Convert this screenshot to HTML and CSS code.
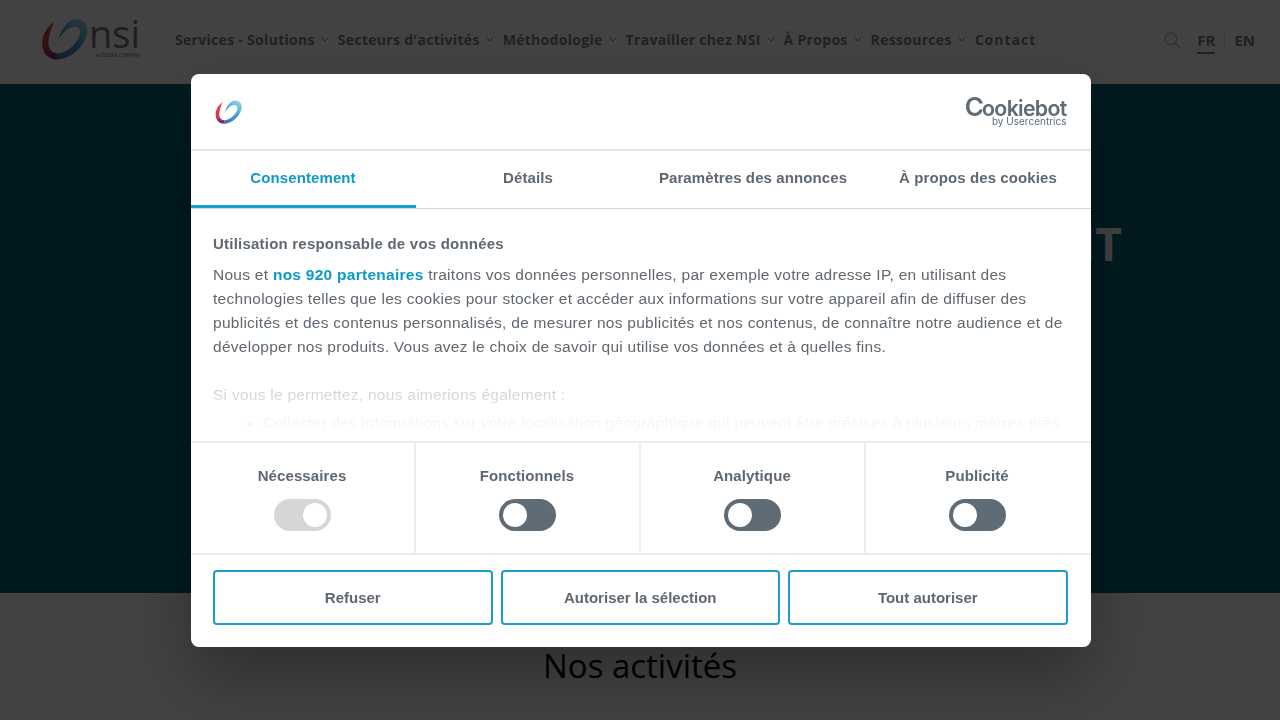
FILE: index.html
```html
<!DOCTYPE html>
<html lang="fr">
<head>
  <meta charset="UTF-8">
  <meta name="viewport" content="width=device-width, initial-scale=1.0">
  <title>NSI</title>
  <link rel="stylesheet" href="styles.css">
</head>
<body>
  <svg class="defs" width="0" height="0" aria-hidden="true">
    <defs>
      <linearGradient id="swirl-warm" gradientUnits="userSpaceOnUse" x1="5" y1="4" x2="9" y2="23">
        <stop offset="0" stop-color="#ee3a43"/>
        <stop offset="0.6" stop-color="#d03a50"/>
        <stop offset="1" stop-color="#5a2a80"/>
      </linearGradient>
      <linearGradient id="swirl-cool" gradientUnits="userSpaceOnUse" x1="10" y1="23" x2="24" y2="1">
        <stop offset="0" stop-color="#3f6fb5"/>
        <stop offset="0.5" stop-color="#4a9fd4"/>
        <stop offset="1" stop-color="#93d8e2"/>
      </linearGradient>
      <symbol id="swirl" viewBox="0 0 27 24">
        <path fill="url(#swirl-warm)" d="M7.5 2.3C3 5.5 .5 10 .7 15C.8 21 5 24 10 23.7L9 20.2C5.5 19.8 4 17 4.3 13.5C4.7 9.5 6 5.5 7.5 2.3Z"/>
        <path fill="url(#swirl-cool)" d="M10 23.7C17 23.3 24 17 26.3 10C27.8 5 25.5 .8 20.5 .6C16 .5 12 5 10 12C13 8 16.5 4.5 20 5C22.8 5.5 23 8.5 21.5 11.5C18.5 17 13.5 20.5 9 20.2Z"/>
      </symbol>
    </defs>
  </svg>

  <!-- Site header -->
  <header class="site-header">
    <a class="brand" href="#">
      <svg class="brand-mark"><use href="#swirl"/></svg>
      <span class="brand-text">
        <span class="brand-name">nsi</span>
        <span class="brand-sub">A CEGEKA COMPANY</span>
      </span>
    </a>
    <nav class="main-nav">
      <a href="#">Services - Solutions<svg class="chevron" viewBox="0 0 8 5"><path d="M.5.5 4 4 7.500.5"/></svg></a>
      <a href="#">Secteurs d'activités<svg class="chevron" viewBox="0 0 8 5"><path d="M.5.5 4 4 7.500.5"/></svg></a>
      <a href="#">Méthodologie<svg class="chevron" viewBox="0 0 8 5"><path d="M.5.5 4 4 7.500.5"/></svg></a>
      <a href="#">Travailler chez NSI<svg class="chevron" viewBox="0 0 8 5"><path d="M.5.5 4 4 7.500.5"/></svg></a>
      <a href="#">À Propos<svg class="chevron" viewBox="0 0 8 5"><path d="M.5.5 4 4 7.500.5"/></svg></a>
      <a href="#">Ressources<svg class="chevron" viewBox="0 0 8 5"><path d="M.5.5 4 4 7.500.5"/></svg></a>
      <a class="nav-contact" href="#">Contact</a>
    </nav>
    <div class="header-tools">
      <svg class="search-icon" viewBox="0 0 16 16"><circle cx="6.500" cy="6.500" r="5.500"/><path d="M10.500 10.500 15.500 15.500"/></svg>
      <a class="lang lang-active" href="#">FR</a>
      <a class="lang lang-next" href="#">EN</a>
    </div>
  </header>

  <!-- Hero, mostly behind the dialog -->
  <section class="hero">
    <h1>NT</h1>
  </section>

  <section class="activities">
    <h2>Nos activités</h2>
  </section>

  <!-- Cookie dialog -->
  <div class="overlay">
    <div class="dialog">
      <div class="dialog-top">
        <svg class="dialog-mark"><use href="#swirl"/></svg>
        <div class="cookiebot">
          <span class="cookiebot-name"><span class="cookiebot-c">C</span>ookiebot</span>
          <span class="cookiebot-sub">by Usercentrics</span>
        </div>
      </div>

      <div class="tabs">
        <a class="tab tab-active" href="#">Consentement</a>
        <a class="tab" href="#">Détails</a>
        <a class="tab" href="#">Paramètres des annonces</a>
        <a class="tab" href="#">À propos des cookies</a>
      </div>

      <div class="dialog-body">
        <h3>Utilisation responsable de vos données</h3>
        <p>Nous et <a href="#">nos 920 partenaires</a> traitons vos données personnelles, par exemple votre adresse IP, en utilisant des technologies telles que les cookies pour stocker et accéder aux informations sur votre appareil afin de diffuser des publicités et des contenus personnalisés, de mesurer nos publicités et nos contenus, de connaître notre audience et de développer nos produits. Vous avez le choix de savoir qui utilise vos données et à quelles fins.</p>
        <p class="also">Si vous le permettez, nous aimerions également :</p>
        <ul>
          <li>Collecter des informations sur votre localisation géographique qui peuvent être précises à plusieurs mètres près</li>
        </ul>
      </div>

      <div class="categories">
        <div class="category">
          <span class="category-name">Nécessaires</span>
          <span class="toggle toggle-locked"></span>
        </div>
        <div class="category">
          <span class="category-name">Fonctionnels</span>
          <span class="toggle"></span>
        </div>
        <div class="category">
          <span class="category-name">Analytique</span>
          <span class="toggle"></span>
        </div>
        <div class="category">
          <span class="category-name">Publicité</span>
          <span class="toggle"></span>
        </div>
      </div>

      <div class="actions">
        <button type="button" class="btn">Refuser</button>
        <button type="button" class="btn">Autoriser la sélection</button>
        <button type="button" class="btn">Tout autoriser</button>
      </div>
    </div>
  </div>
</body>
</html>
```

FILE: styles.css
```css
/* Global reset */
* {
  margin: 0;
  padding: 0;
  box-sizing: border-box;
}

html,
body {
  height: 720px;
  overflow: hidden;
}

body {
  font-family: 'Open Sans', sans-serif;
  background-color: white;
}

a {
  color: inherit;
  text-decoration: none;
}

.defs {
  display: block;
  height: 0;
}

/* Site header */
.site-header {
  height: 84px;
  background-color: white;
  display: flex;
  align-items: center;
  padding: 0 25px 4px 41px;
}

.brand {
  display: flex;
  align-items: flex-start;
  gap: 5px;
  width: 134px;
  flex-shrink: 0;
  align-self: flex-start;
  margin-top: 18px;
}

.brand-mark {
  width: 47px;
  height: 42px;
}

.brand-text {
  display: flex;
  flex-direction: column;
  align-items: flex-end;
  width: 47px;
}

.brand-name {
  font-size: 38px;
  line-height: 30px;
  color: #757575;
}

.brand-sub {
  font-size: 4.5px;
  line-height: 8px;
  margin-top: 3px;
  white-space: nowrap;
  color: #666;
}

.main-nav {
  display: flex;
  gap: 7px;
  margin-bottom: 2px;
  font-size: 14px;
  font-weight: bold;
  letter-spacing: 0.3px;
  color: #7f7f7f;
  white-space: nowrap;
}

.main-nav a {
  display: flex;
  align-items: center;
}

.main-nav .nav-contact {
  letter-spacing: 1px;
}

.chevron {
  width: 8px;
  height: 5px;
  margin-left: 6px;
  margin-right: 2px;
  fill: none;
  stroke: #8a8a8a;
  stroke-width: 1;
}

.header-tools {
  margin-left: auto;
  display: flex;
  align-items: center;
  font-size: 15px;
  font-weight: bold;
  color: #7f7f7f;
}

.search-icon {
  width: 17px;
  height: 17px;
  margin-right: 16px;
  fill: none;
  stroke: #c4c4c4;
  stroke-width: 1.5;
}

.lang-active {
  padding: 2px 0;
  border-bottom: 2px solid #7f7f7f;
  margin-top: 2px;
}

.lang-next {
  margin-left: 9px;
  padding-left: 9px;
  border-left: 1px solid #e4e4e4;
}

/* Hero */
.hero {
  height: 509px;
  background-color: #086479;
  display: flex;
  justify-content: flex-end;
  padding: 128px 158px 0 0;
}

.hero h1 {
  font-size: 46px;
  line-height: 62px;
  font-weight: bold;
  color: white;
}

/* Activities */
.activities {
  padding-top: 49px;
  text-align: center;
}

.activities h2 {
  font-size: 33px;
  line-height: 48px;
  font-weight: normal;
  color: black;
}

/* Dialog and backdrop */
.overlay {
  position: fixed;
  inset: 0;
  padding-left: 1px;
  background-color: rgba(0, 0, 0, 0.74);
  display: flex;
  justify-content: center;
  align-items: center;
}

.dialog {
  width: 900px;
  height: 573px;
  background-color: white;
  border-radius: 8px;
  box-shadow: 0 32px 68px rgba(0, 0, 0, 0.3);
  font-family: 'Liberation Sans', Arial, sans-serif;
  color: #5f6870;
  display: flex;
  flex-direction: column;
  overflow: hidden;
}

.dialog-top {
  height: 77px;
  flex-shrink: 0;
  display: flex;
  justify-content: space-between;
  align-items: flex-start;
  padding: 23px 24px 0 24px;
  border-bottom: 2px solid #e4e4e4;
}

.dialog-mark {
  width: 27px;
  height: 24px;
  margin-top: 3px;
}

.cookiebot {
  display: flex;
  flex-direction: column;
  align-items: flex-end;
  color: #5f6b75;
  font-family: Inter, sans-serif;
}

.cookiebot-name {
  display: block;
  height: 18px;
  font-size: 21.3px;
  line-height: 20px;
  font-weight: 600;
  letter-spacing: -0.7px;
}

.cookiebot-c {
  font-size: 26px;
  line-height: 20px;
  font-weight: 600;
  margin-right: -1px;
}

.cookiebot-sub {
  font-size: 10px;
  line-height: 12px;
  font-weight: 400;
}

/* Tabs */
.tabs {
  height: 58px;
  flex-shrink: 0;
  display: grid;
  grid-template-columns: repeat(4, 1fr);
  border-bottom: 1px solid #d6d6d6;
}

.tab {
  display: flex;
  justify-content: center;
  align-items: center;
  height: 57px;
  padding-bottom: 3px;
  font-size: 15px;
  font-weight: bold;
  letter-spacing: 0.1px;
}

.tab-active {
  color: #0d9ac6;
  border-bottom: 3px solid #1a9dcb;
  padding-bottom: 0;
}

/* Body text */
.dialog-body {
  position: relative;
  height: 232px;
  flex-shrink: 0;
  overflow: hidden;
  padding: 23px 23px 0 22.5px;
  font-size: 15.5px;
  line-height: 24px;
  letter-spacing: 0.27px;
}

.dialog-body::after {
  content: "";
  position: absolute;
  left: 0;
  right: 0;
  bottom: 0;
  height: 90px;
  background: linear-gradient(rgba(255, 255, 255, 0), rgba(255, 255, 255, 0.7) 45%, rgba(255, 255, 255, 0.92) 76%, white);
}

.dialog-body h3 {
  font-size: 15px;
  line-height: 24px;
  letter-spacing: 0.22px;
  margin-bottom: 7px;
}

.dialog-body p a {
  color: #0d9ac6;
  font-weight: bold;
}

.also {
  margin-top: 24px;
}

.dialog-body ul {
  padding-left: 50px;
  margin-top: 4px;
  white-space: nowrap;
}

/* Categories */
.categories {
  height: 114px;
  flex-shrink: 0;
  display: grid;
  grid-template-columns: repeat(4, 1fr);
  border-top: 2px solid #ececec;
  border-bottom: 2px solid #ececec;
}

.category {
  display: flex;
  flex-direction: column;
  align-items: center;
  padding-top: 23px;
  border-right: 2px solid #ececec;
}

.category:last-child {
  border-right-color: transparent;
}

.category-name {
  font-size: 15px;
  line-height: 20px;
  font-weight: bold;
  letter-spacing: 0.1px;
  margin-bottom: 13px;
}

.toggle {
  position: relative;
  display: block;
  width: 57px;
  height: 32px;
  border-radius: 16px;
  background-color: #5f6b75;
}

.toggle::after {
  content: "";
  position: absolute;
  top: 4px;
  left: 4px;
  width: 24px;
  height: 24px;
  border-radius: 50%;
  background-color: white;
}

.toggle-locked {
  background-color: #d6d6d6;
}

.toggle-locked::after {
  left: 29px;
}

/* Buttons */
.actions {
  flex-grow: 1;
  display: flex;
  gap: 8px;
  padding: 15px 23px 22px 22.5px;
}

.btn {
  flex: 1;
  height: 55px;
  background-color: white;
  color: #5f6870;
  border: 2px solid #1a9dcb;
  border-radius: 4px;
  font-family: 'Liberation Sans', Arial, sans-serif;
  font-size: 15px;
  font-weight: bold;
  cursor: pointer;
}
```
